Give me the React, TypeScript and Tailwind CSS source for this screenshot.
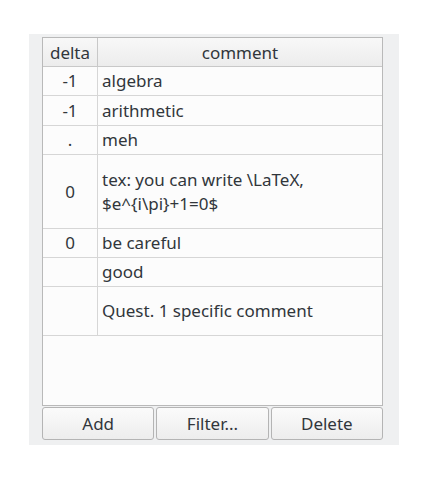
import React from "react";

const rows: { delta: string; comment: string[]; h: string }[] = [
  { delta: "-1", comment: ["algebra"], h: "h-[29px]" },
  { delta: "-1", comment: ["arithmetic"], h: "h-[30px]" },
  { delta: ".", comment: ["meh"], h: "h-[29px]" },
  { delta: "0", comment: ["tex: you can write \\LaTeX,", "$e^{i\\pi}+1=0$"], h: "h-[74px]" },
  { delta: "0", comment: ["be careful"], h: "h-[29px]" },
  { delta: "", comment: ["good"], h: "h-[29px]" },
  { delta: "", comment: ["Quest. 1 specific comment"], h: "h-[49px]" },
];

export default function App() {
  return (
    <div className="w-[427px] h-[480px] bg-white pt-[34px] pl-[29px] font-['Noto_Sans',sans-serif] text-[17px] text-[#31363b]">
      <div className="w-[370px] h-[411px] bg-[#eff0f1] pl-[13px] pt-[3px]">
        {/* table */}
        <div className="w-[341px] h-[369px] bg-[#fcfcfc] border border-[#b9b9b9] flex flex-col">
          {/* header */}
          <div className="flex h-[29px] border-b border-[#c8c8c8] bg-gradient-to-b from-[#f8f8f8] to-[#ececec] leading-none">
            <div className="w-[55px] border-r border-[#c8c8c8] flex items-center justify-center">delta</div>
            <div className="flex-1 flex items-center justify-center">comment</div>
          </div>
          {rows.map((r, i) => (
            <div key={i} className={`flex ${r.h} border-b border-[#d6d6d6]`}>
              <div className="w-[55px] border-r border-[#d6d6d6] flex items-center justify-center">{r.delta}</div>
              <div className="flex-1 flex flex-col justify-center pl-[4px] leading-[24px]">
                {r.comment.map((c, j) => (
                  <div key={j}>{c}</div>
                ))}
              </div>
            </div>
          ))}
        </div>
        {/* buttons */}
        <div className="flex w-[341px] gap-[2px] mt-[1px]">
          {["Add", "Filter...", "Delete"].map((b) => (
            <button
              key={b}
              className="flex-1 h-[33px] rounded-[3px] border border-[#b4b4b4] bg-gradient-to-b from-[#fbfbfb] to-[#ededed] text-[17px] text-[#31363b]"
            >
              {b}
            </button>
          ))}
        </div>
      </div>
    </div>
  );
}
